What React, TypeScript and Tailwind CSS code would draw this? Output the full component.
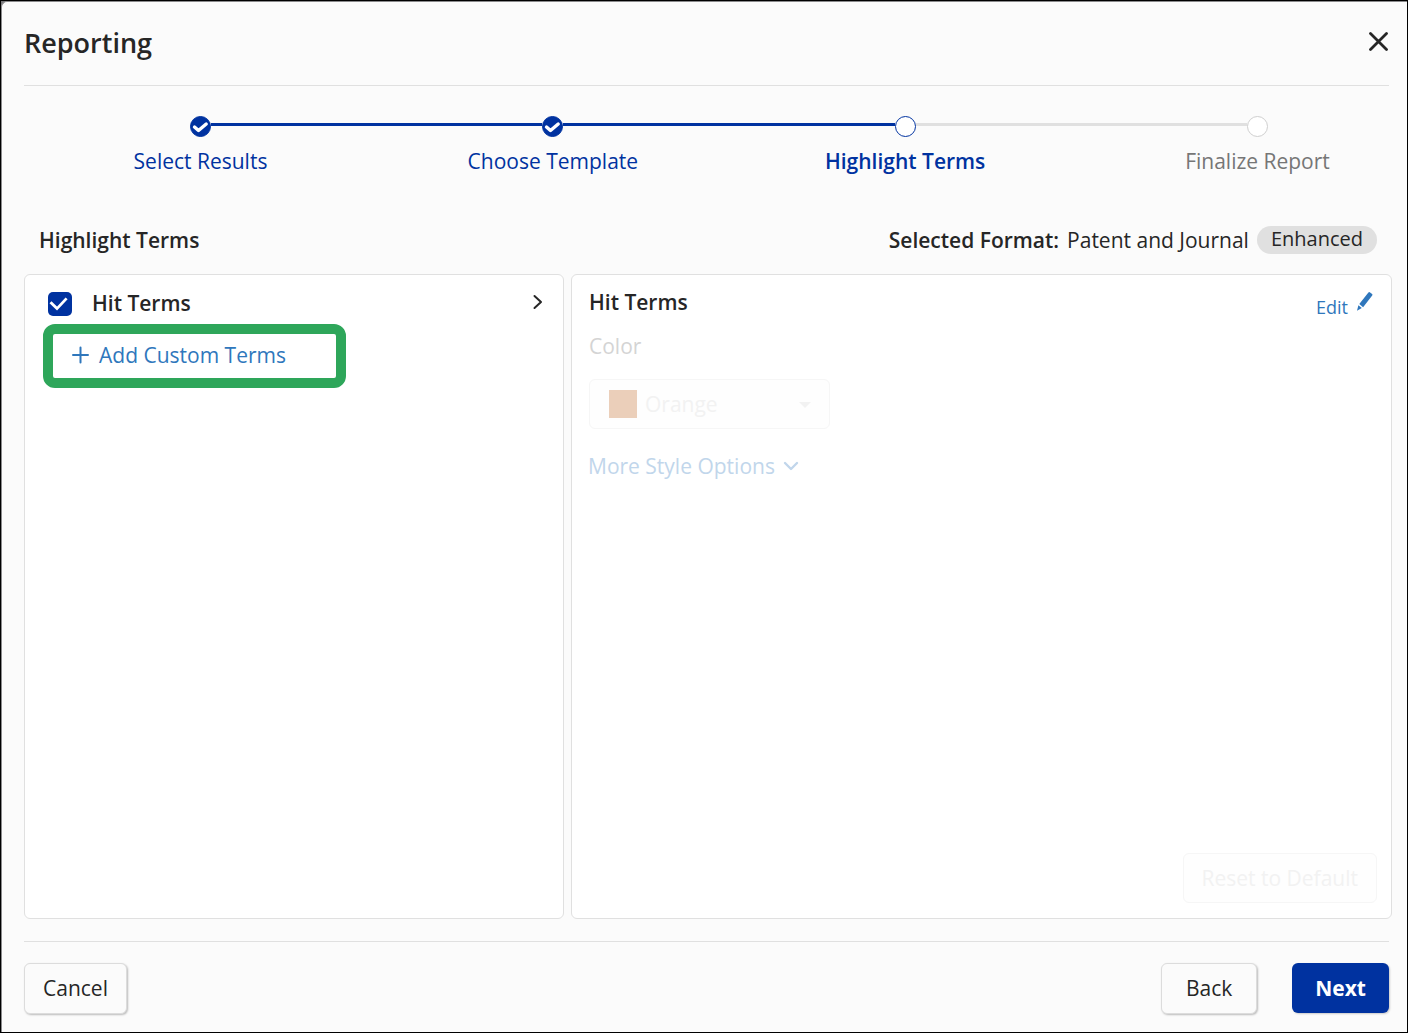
import React from 'react';
import { clsx } from 'clsx';

type StepState = 'done' | 'current' | 'upcoming';

const steps: { label: string; state: StepState }[] = [
  { label: 'Select Results', state: 'done' },
  { label: 'Choose Template', state: 'done' },
  { label: 'Highlight Terms', state: 'current' },
  { label: 'Finalize Report', state: 'upcoming' },
];

const StepMarker: React.FC<{ state: StepState }> = ({ state }) => (
  <span
    className={clsx(
      'flex h-[21px] w-[21px] shrink-0 items-center justify-center rounded-full border',
      state === 'done' && 'border-[#0032a0] bg-[#0032a0]',
      state === 'current' && 'border-[#0032a0] bg-white',
      state === 'upcoming' && 'border-[#cfcfcf] bg-white'
    )}
  >
    {state === 'done' && (
      <svg viewBox="0 0 17 12" className="h-3 w-[17px] shrink-0" fill="none" stroke="#fff" strokeWidth="3.4" strokeLinecap="round" strokeLinejoin="round">
        <path d="M2.5 6 L6.5 9.5 L14.2 3" />
      </svg>
    )}
  </span>
);

const Stepper: React.FC = () => (
  <ol className="flex pt-[30px] pr-11 pl-[88px]">
    {steps.map((step, i) => {
      const last = i === steps.length - 1;
      return (
        <li key={step.label} className={last ? 'w-44 flex-none' : 'min-w-0 flex-1'} aria-current={step.state === 'current' ? 'step' : undefined}>
          <div className="flex items-start pl-[78px]">
            <StepMarker state={step.state} />
            {!last && (
              <span className={clsx('mt-[7px] -mr-[78px] h-[3px] flex-1', step.state === 'done' ? 'bg-[#0032a0]' : 'bg-[#e0e0e0]')} />
            )}
          </div>
          <div
            className={clsx(
              'mt-2 w-[177px] text-center leading-8 whitespace-nowrap',
              step.state === 'done' && 'text-[#0032a0]',
              step.state === 'current' && 'font-semibold text-[#0032a0]',
              step.state === 'upcoming' && 'text-[#767676]'
            )}
          >
            {step.label}
          </div>
        </li>
      );
    })}
  </ol>
);

const TermsPanel: React.FC = () => (
  <section className="w-[540px] shrink-0 rounded-md border border-[#e0e0e0] bg-white">
    <div className="flex items-center pt-3 pr-[19px] pl-[23px]">
      <span className="relative mt-0.5 flex h-6 w-6">
        <input id="hit-terms" type="checkbox" defaultChecked className="h-6 w-6 appearance-none rounded-[5px] bg-[#0032a0]" />
        <svg viewBox="0 0 24 24" className="pointer-events-none absolute inset-0 h-6 w-6" fill="none" stroke="#fff" strokeWidth="2.8">
          <path d="M2.5 10.2 L9 16.6 L18.6 6.4" />
        </svg>
      </span>
      <label htmlFor="hit-terms" className="ml-5 flex-1 leading-8 font-semibold">
        Hit Terms
      </label>
      <button type="button" aria-label="Open hit terms" className="mb-0.5">
        <svg viewBox="0 0 12 16" className="h-4 w-3" fill="none" stroke="#262626" strokeWidth="2" strokeLinecap="round" strokeLinejoin="round">
          <path d="M2.5 2 L9 8 L2.5 14" />
        </svg>
      </button>
    </div>
    <button
      type="button"
      className="mt-[5px] ml-[18px] flex h-16 w-[303px] items-center rounded-xl border-[10px] border-[#2ea65a] bg-white pl-[18px] text-[#2f77bc]"
    >
      <svg viewBox="0 0 18 18" className="mb-0.5 h-[18px] w-[18px]" fill="none" stroke="currentColor" strokeWidth="2" strokeLinecap="round">
        <path d="M9.5 1.5 V16.5 M2 9 H17" />
      </svg>
      <span className="ml-2.5">Add Custom Terms</span>
    </button>
  </section>
);

const StylePanel: React.FC = () => (
  <section className="flex min-w-0 flex-1 flex-col items-start rounded-md border border-[#e0e0e0] bg-white pr-3.5 pb-[15px] pl-4">
    <div className="flex w-full items-start justify-between pt-[11px] pl-px">
      <h3 className="leading-8 font-semibold">Hit Terms</h3>
      <button type="button" className="flex items-start pt-[5px] pr-1 text-lg leading-8 text-[#2f77bc]">
        Edit
        <svg viewBox="0 0 17 20" className="ml-2 h-5 w-[17px]" fill="currentColor">
          <path d="M12.4 1.6 Q13.2 0.7 14.1 1.4 L16.1 3 Q16.9 3.7 16.2 4.6 L7.1 16.2 L3.3 13.1 Z M2.4 14.3 L5.8 17.1 L1 19.8 Z" />
        </svg>
      </button>
    </div>
    <label htmlFor="highlight-color" className="mt-[7px] ml-px leading-8 text-[#d4d4d4]">
      Color
    </label>
    <div className="mt-[17px] ml-px flex h-[50px] w-[241px] items-center rounded-md border border-[#f6f6f6] bg-[#fefefe] pr-[18px] pl-[19px] text-[#f2f2f2]">
      <span className="h-7 w-7 bg-[#ebcfba]" />
      <select id="highlight-color" disabled className="ml-2 min-w-0 flex-1 appearance-none bg-transparent pt-0.5 text-[#f2f2f2] opacity-100">
        <option>Orange</option>
      </select>
      <svg viewBox="0 0 12 6" className="mt-0.5 h-1.5 w-3" fill="currentColor">
        <path d="M0 0 H12 L6 6 Z" />
      </svg>
    </div>
    <button type="button" disabled className="mt-[21px] flex items-center leading-8 text-[#c1d6eb]">
      More Style Options
      <svg viewBox="0 0 16 10" className="ml-2 h-2.5 w-4" fill="none" stroke="currentColor" strokeWidth="2.4" strokeLinecap="round" strokeLinejoin="round">
        <path d="M2 2 L8 8 L14 2" />
      </svg>
    </button>
    <button type="button" disabled className="mt-auto h-[50px] self-end rounded-md border border-[#f6f6f6] bg-[#fefefe] px-[18px] pt-0.5 text-[#f2f2f2]">
      Reset to Default
    </button>
  </section>
);

export default function App() {
  return (
    <div className="min-h-screen border border-black bg-[#77777a] font-['Open_Sans','Noto_Sans',sans-serif] text-[21px] text-[#262626]">
      <div className="flex min-h-[calc(100vh-2px)] flex-col rounded-tl-md border-t border-l border-[#8a8a8c] bg-[#fbfbfb] pr-[15px] pb-[18px] pl-[22px]">
        <header className="mr-[3px] flex h-[84px] items-center justify-between border-b border-[#e0e0e0]">
          <h1 className="text-[27px] font-semibold">Reporting</h1>
          <button type="button" aria-label="Close" className="mb-1">
            <svg viewBox="0 0 20 20" className="h-5 w-5" fill="none" stroke="#262626" strokeWidth="2.8" strokeLinecap="round">
              <path d="M1.5 1.5 L17.5 17.5 M17.5 1.5 L1.5 17.5" />
            </svg>
          </button>
        </header>

        <div className="mr-[3px]">
          <Stepper />
        </div>

        <div className="flex items-center justify-between pt-[47px] pr-[15px] pb-[18px] pl-[15px]">
          <h2 className="leading-8 font-semibold">Highlight Terms</h2>
          <div className="flex items-center leading-8">
            <span className="font-semibold">Selected Format:</span>
            <span className="ml-2">Patent and Journal</span>
            <span className="ml-2 h-7 rounded-full bg-[#e0e0e0] px-3.5 text-[20px] leading-[26px]">Enhanced</span>
          </div>
        </div>

        <main className="flex flex-1 gap-[7px]">
          <TermsPanel />
          <StylePanel />
        </main>

        <footer className="mt-[22px] mr-[3px] flex items-start border-t border-[#e0e0e0] pt-[21px]">
          <button type="button" className="h-[51px] rounded-md border border-[#dcdcdc] bg-[#fbfbfb] px-[18px] shadow-[1px_1px_2px_rgba(0,0,0,0.25)]">
            Cancel
          </button>
          <button type="button" className="ml-auto h-[51px] rounded-md border border-[#dcdcdc] bg-[#fbfbfb] px-6 shadow-[1px_1px_2px_rgba(0,0,0,0.25)]">
            Back
          </button>
          <button type="button" className="ml-[35px] h-[50px] rounded-md bg-[#0032a0] px-[23px] pt-0.5 font-bold text-white shadow-[1px_1px_2px_rgba(0,0,0,0.2)]">
            Next
          </button>
        </footer>
      </div>
    </div>
  );
}
